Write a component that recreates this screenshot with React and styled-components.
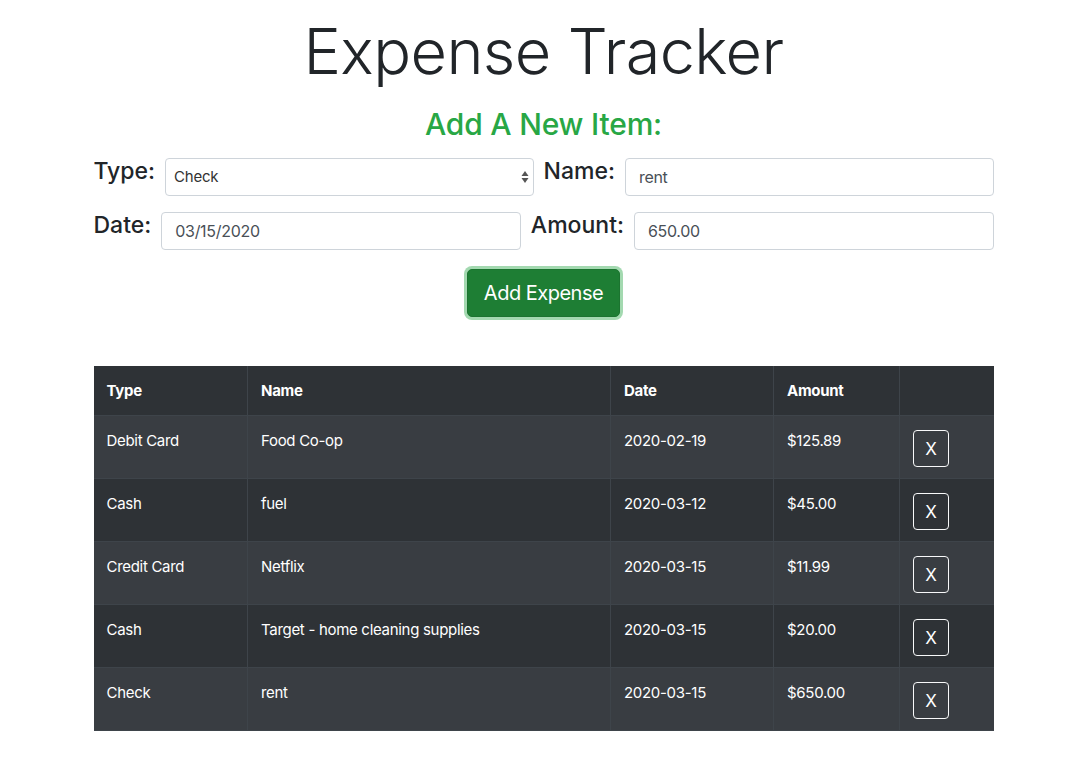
import styled, {createGlobalStyle} from "styled-components";
import {useState} from "react";

const GlobalStyle = createGlobalStyle`
  body {
    margin: 0;
    background: #fff;
    font-family: Inter, "Noto Sans", "Liberation Sans", sans-serif;
    color: #212529;
  }
`;

const Page = styled.div`
  width: 900px;
  margin: 0 auto;
  padding-top: 14px;
`;

const Title = styled.h1`
  margin: 0;
  text-align: center;
  font-size: 63px;
  font-weight: 300;
  line-height: 1.2;
  letter-spacing: -0.6px;
`;

const SubTitle = styled.h3`
  margin: 16px 0 16px;
  text-align: center;
  font-size: 30px;
  font-weight: 500;
  line-height: 1.2;
  letter-spacing: -0.2px;
  color: #28a745;
`;

const FormRow = styled.div`
  display: flex;
  align-items: flex-start;
  gap: 10px;
  margin-bottom: 16px;
`;

const Label = styled.label`
  font-size: 23px;
  font-weight: 500;
  line-height: 30px;
  margin-top: -2px;
  white-space: nowrap;
`;

const Field = styled.div`
  position: relative;
  flex: 1;
`;

const Input = styled.input`
  box-sizing: border-box;
  width: 100%;
  height: 38px;
  padding: 6px 13px;
  font-family: inherit;
  font-size: 16px;
  letter-spacing: -0.3px;
  color: #495057;
  border: 1px solid #ced4da;
  border-radius: 4px;
  outline: none;
`;

const Select = styled.select`
  box-sizing: border-box;
  width: 100%;
  height: 38px;
  padding: 6px 8px;
  font-family: inherit;
  font-size: 15px;
  letter-spacing: -0.2px;
  color: #333;
  background: #fff;
  border: 1px solid #ced4da;
  border-radius: 4px;
  appearance: none;
  outline: none;
`;

const Arrows = styled.svg`
  position: absolute;
  right: 4px;
  top: 12px;
  pointer-events: none;
`;

const ButtonRow = styled.div`
  display: flex;
  justify-content: center;
  margin: 19px 0 49px;
`;

const AddButton = styled.button`
  height: 48px;
  padding: 0 16px;
  font-family: inherit;
  font-size: 20px;
  letter-spacing: -0.5px;
  color: #fff;
  background: #1e7e34;
  border: 1px solid #1c7430;
  border-radius: 5px;
  box-shadow: 0 0 0 3px rgba(72, 180, 97, 0.5);
  cursor: pointer;
`;

const Table = styled.table`
  width: 100%;
  border-collapse: collapse;
  color: #fff;
  background: #2e3236;
  font-size: 15px;
  letter-spacing: -0.3px;
`;

const Th = styled.th`
  text-align: left;
  font-weight: 700;
  padding: 12px 13px;
  height: 50px;
  box-sizing: border-box;
  border: 1px solid #3e444a;
  border-top: none;
  width: ${p => p.$w || "auto"};
  &:first-child { border-left: none; }
  &:last-child { border-right: none; }
`;

const Row = styled.tr`
  background: ${p => (p.$odd ? "#393d42" : "#2e3236")};
`;

const Td = styled.td`
  vertical-align: top;
  padding: 13px 13px 11px;
  height: 62px;
  box-sizing: border-box;
  line-height: 24px;
  border: 1px solid #3e444a;
  &:first-child { border-left: none; }
  &:last-child { border-right: none; }
`;

const DeleteButton = styled.button`
  display: block;
  margin-top: 1px;
  width: 36px;
  height: 37px;
  font-family: inherit;
  font-size: 17px;
  color: #fff;
  background: transparent;
  border: 1px solid #f8f9fa;
  border-radius: 4px;
  cursor: pointer;
`;

const expenses = [
    {type: "Debit Card", name: "Food Co-op", date: "2020-02-19", amount: "$125.89"},
    {type: "Cash", name: "fuel", date: "2020-03-12", amount: "$45.00"},
    {type: "Credit Card", name: "Netflix", date: "2020-03-15", amount: "$11.99"},
    {type: "Cash", name: "Target - home cleaning supplies", date: "2020-03-15", amount: "$20.00"},
    {type: "Check", name: "rent", date: "2020-03-15", amount: "$650.00"},
];

const App = () => {
    const [type, setType] = useState("Check")
    const [name, setName] = useState("rent")
    const [date, setDate] = useState("03/15/2020")
    const [amount, setAmount] = useState("650.00")

    return (
        <>
            <GlobalStyle/>
            <Page>
                <Title>Expense Tracker</Title>
                <SubTitle>Add A New Item:</SubTitle>
                <FormRow>
                    <Label>Type:</Label>
                    <Field>
                        <Select value={type} onChange={e => setType(e.target.value)}>
                            <option>Cash</option>
                            <option>Check</option>
                            <option>Debit Card</option>
                            <option>Credit Card</option>
                        </Select>
                        <Arrows width="10" height="14" viewBox="0 0 10 14">
                            <path d="M5 1 L8.5 6 L1.5 6 Z" fill="#555"/>
                            <path d="M5 13 L8.5 8 L1.5 8 Z" fill="#555"/>
                        </Arrows>
                    </Field>
                    <Label>Name:</Label>
                    <Field>
                        <Input value={name} onChange={e => setName(e.target.value)}/>
                    </Field>
                </FormRow>
                <FormRow>
                    <Label>Date:</Label>
                    <Field>
                        <Input value={date} onChange={e => setDate(e.target.value)}/>
                    </Field>
                    <Label>Amount:</Label>
                    <Field>
                        <Input value={amount} onChange={e => setAmount(e.target.value)}/>
                    </Field>
                </FormRow>
                <ButtonRow>
                    <AddButton>Add Expense</AddButton>
                </ButtonRow>
                <Table>
                    <thead>
                    <tr>
                        <Th $w="154px">Type</Th>
                        <Th $w="363px">Name</Th>
                        <Th $w="163px">Date</Th>
                        <Th $w="126px">Amount</Th>
                        <Th></Th>
                    </tr>
                    </thead>
                    <tbody>
                    {expenses.map((x, i) =>
                        <Row key={i} $odd={i % 2 === 0}>
                            <Td>{x.type}</Td>
                            <Td>{x.name}</Td>
                            <Td>{x.date}</Td>
                            <Td>{x.amount}</Td>
                            <Td><DeleteButton>X</DeleteButton></Td>
                        </Row>
                    )}
                    </tbody>
                </Table>
            </Page>
        </>
    )
}

export default App
